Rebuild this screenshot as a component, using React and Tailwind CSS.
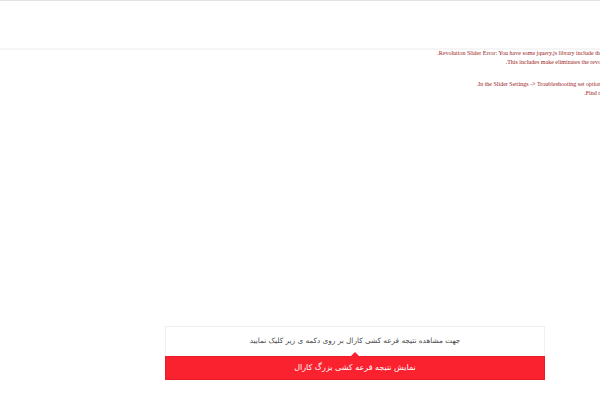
import React from 'react'

const App = () => {
  return (
    <div className="w-[600px] h-[400px] overflow-hidden bg-white relative">
      {/* header strip */}
      <div className="h-[50px] border-t border-[#e2e2e2] border-b-2 border-b-[#f5f5f5]"></div>

      {/* slider error */}
      <div
        dir="rtl"
        className="w-[705px] -mt-[1px] text-right text-[6px] leading-[9px] text-[#9b1c1c]"
        style={{ fontFamily: '"Liberation Serif", serif' }}
      >
        <div>Revolution Slider Error: You have some jquery.js library include that comes after the revolution files js include.</div>
        <div>This includes make eliminates the revolution slider libraries, and make it not work.</div>
        <div>To fix it you can:</div>
        <div className="h-[4px]"></div>
        <div>1. In the Slider Settings -&gt; Troubleshooting set option: &nbsp;Put JS Includes To Body option to true.</div>
        <div>2. Find the double jquery.js include and remove it.</div>
      </div>

      {/* result box */}
      <div className="absolute left-[165px] top-[326px] w-[380px]" dir="rtl">
        <div
          className="h-[30px] flex items-center justify-center border border-[#f0f0f0] border-b-0 text-[7.3px] text-[#4a4a4a]"
          style={{ fontFamily: '"DejaVu Sans", sans-serif' }}
        >
          جهت مشاهده نتیجه قرعه کشی کارال بر روی دکمه ی زیر کلیک نمایید
        </div>
        <div className="relative h-[24px] bg-[#fb2230] flex items-center justify-center border border-[#e81c2a]">
          <div className="absolute left-1/2 -translate-x-1/2 -top-[5px] w-0 h-0 border-l-[5px] border-r-[5px] border-b-[5px] border-l-transparent border-r-transparent border-b-[#fb2230]"></div>
          <span
            className="text-white text-[8px]"
            style={{ fontFamily: '"DejaVu Sans", sans-serif' }}
          >
            نمایش نتیجه قرعه کشی بزرگ کارال
          </span>
        </div>
      </div>
    </div>
  )
}

export default App
